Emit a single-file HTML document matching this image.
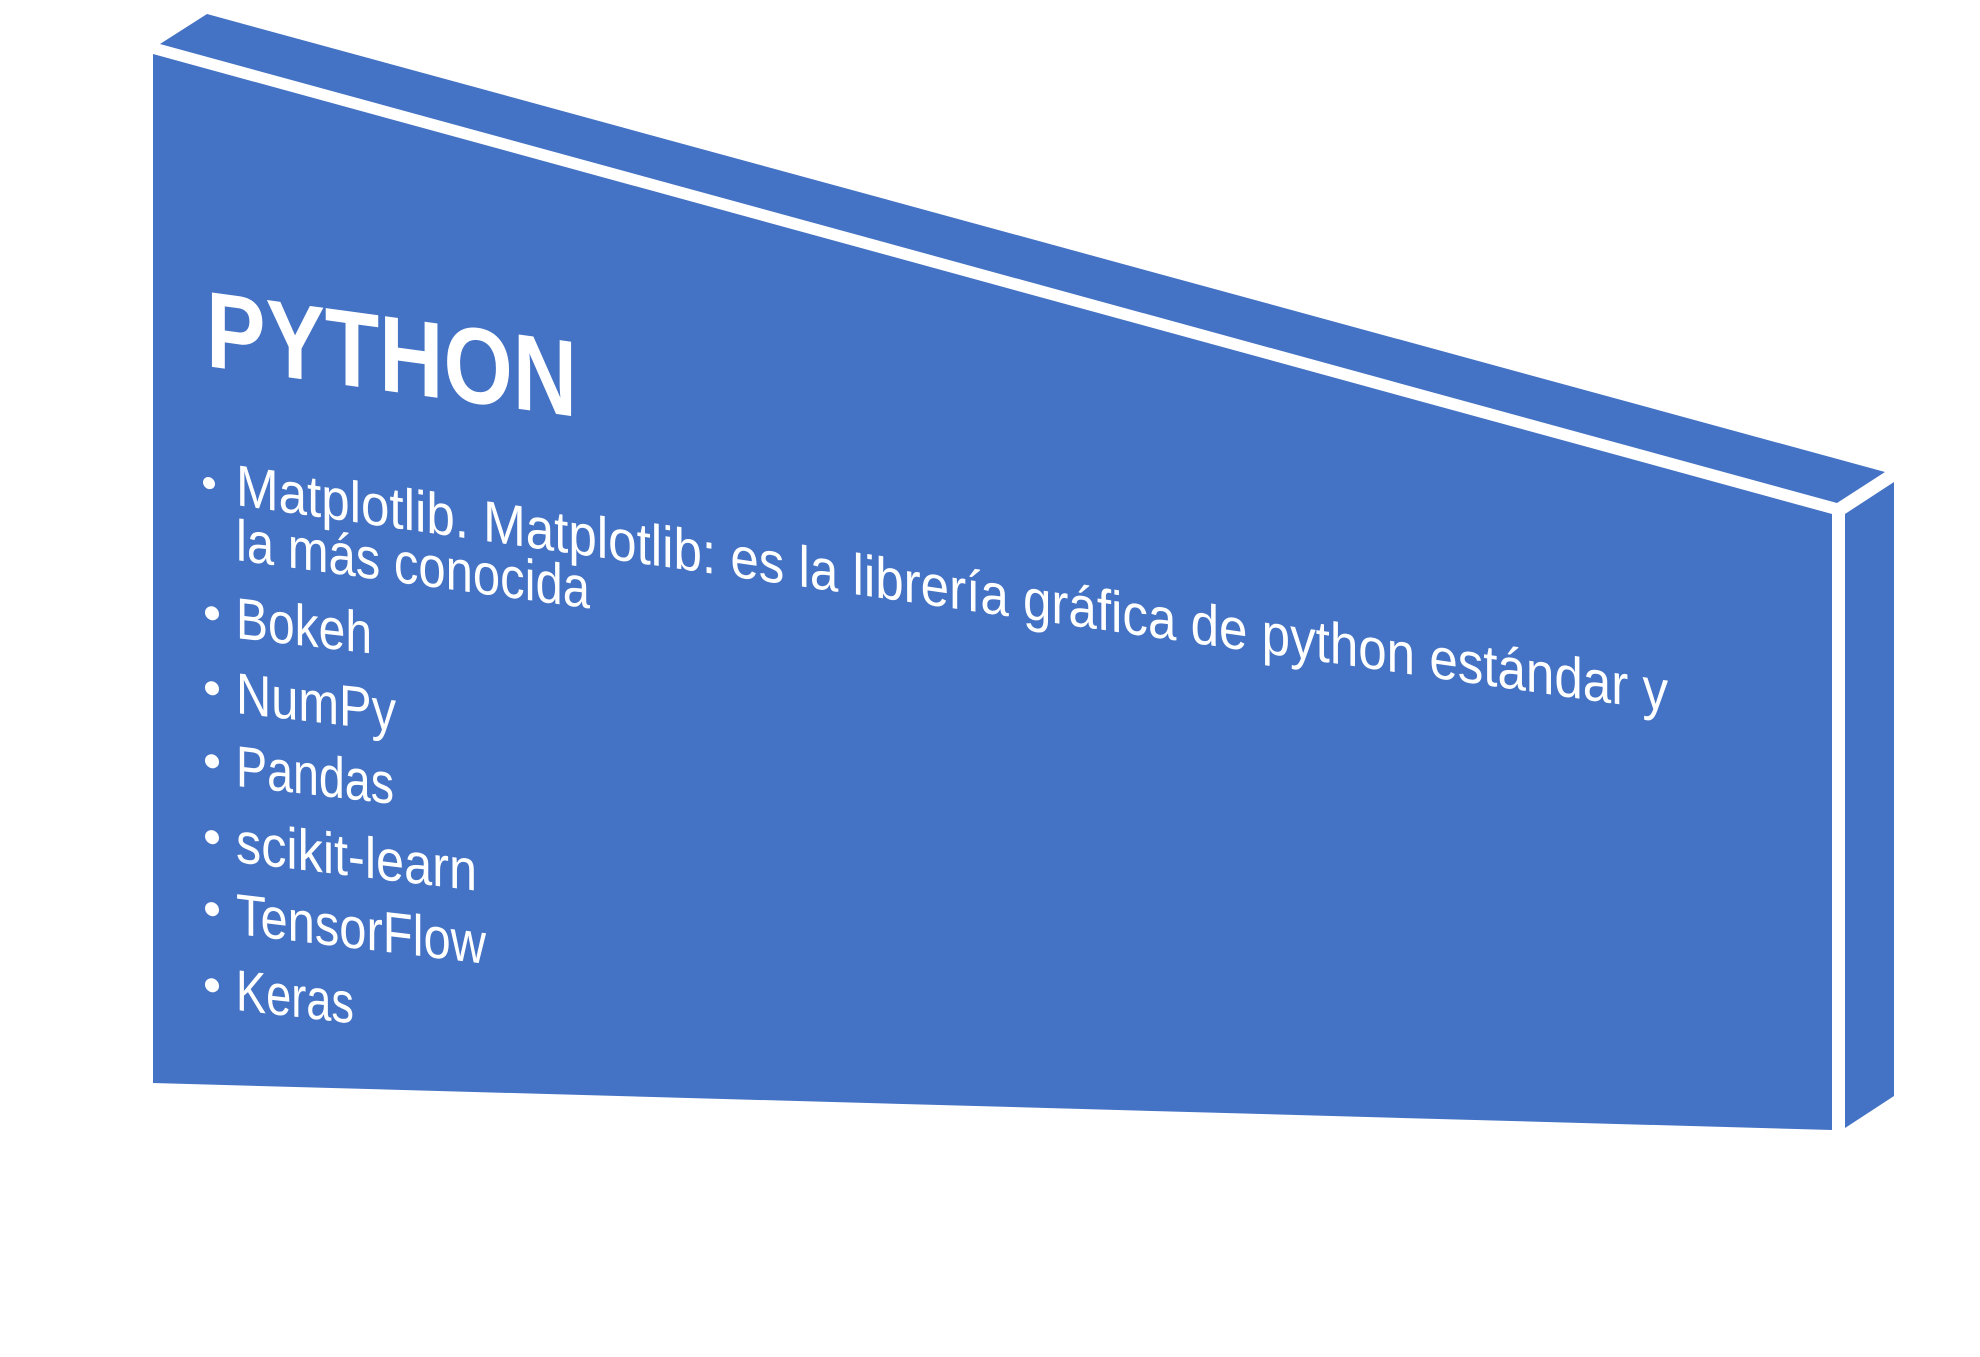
<!DOCTYPE html>
<html><head><meta charset="utf-8"><style>
html,body{margin:0;padding:0;background:#fff;width:1980px;height:1357px;overflow:hidden}
svg{display:block}
text{font-family:"Liberation Sans",sans-serif;fill:#fff}
</style></head><body>
<svg width="1980" height="1357" viewBox="0 0 1980 1357">
<polygon points="160,44 207,14 1885,472 1837,503" fill="#4472c4"/>
<polygon points="153,54 1832,514 1832,1130 153,1083" fill="#4472c4"/>
<polygon points="1845,514 1894,482 1894,1096 1845,1128" fill="#4472c4"/>
<g transform="translate(206,366) skewY(7.8)"><text x="0" y="0" font-size="108" font-weight="bold" textLength="371" lengthAdjust="spacingAndGlyphs">PYTHON</text></g>
<g transform="translate(236,505) skewY(8.2)"><text x="0" y="0" font-size="58" textLength="1432" lengthAdjust="spacingAndGlyphs">Matplotlib. Matplotlib: es la librería gráfica de python estándar y</text><circle cx="-27" cy="-18" r="6" fill="#fff"/></g>
<g transform="translate(236,560) skewY(7.8)"><text x="0" y="0" font-size="58" textLength="354" lengthAdjust="spacingAndGlyphs">la más conocida</text></g>
<g transform="translate(236,638) skewY(6.5)"><text x="0" y="0" font-size="58" textLength="136" lengthAdjust="spacingAndGlyphs">Bokeh</text><circle cx="-24" cy="-22" r="7" fill="#fff"/></g>
<g transform="translate(236,713) skewY(6.5)"><text x="0" y="0" font-size="58" textLength="160" lengthAdjust="spacingAndGlyphs">NumPy</text><circle cx="-24" cy="-22" r="7" fill="#fff"/></g>
<g transform="translate(236,786) skewY(6.5)"><text x="0" y="0" font-size="58" textLength="158" lengthAdjust="spacingAndGlyphs">Pandas</text><circle cx="-24" cy="-22" r="7" fill="#fff"/></g>
<g transform="translate(236,862) skewY(6.8)"><text x="0" y="0" font-size="58" textLength="241" lengthAdjust="spacingAndGlyphs">scikit-learn</text><circle cx="-24" cy="-22" r="7" fill="#fff"/></g>
<g transform="translate(236,934) skewY(6.8)"><text x="0" y="0" font-size="58" textLength="250" lengthAdjust="spacingAndGlyphs">TensorFlow</text><circle cx="-24" cy="-22" r="7" fill="#fff"/></g>
<g transform="translate(236,1010) skewY(6.5)"><text x="0" y="0" font-size="58" textLength="118" lengthAdjust="spacingAndGlyphs">Keras</text><circle cx="-24" cy="-22" r="7" fill="#fff"/></g>
</svg>
</body></html>
